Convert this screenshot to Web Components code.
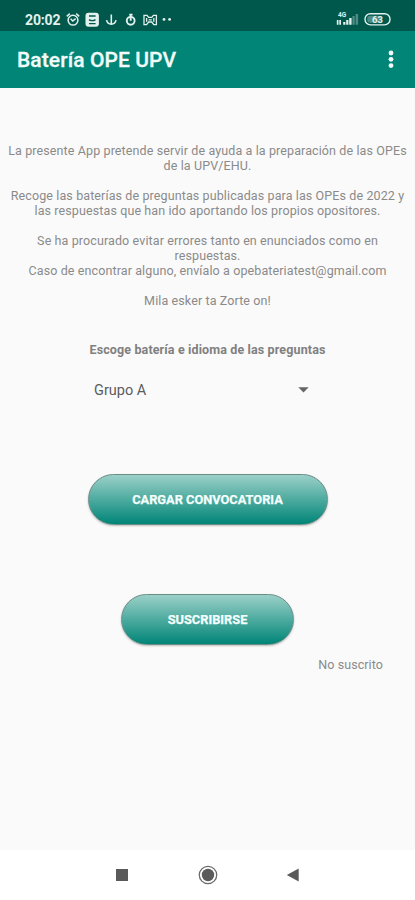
<!DOCTYPE html>
<html lang="es"><head><meta charset="utf-8"><title>Batería OPE UPV</title>
<style>
html,body{margin:0;height:100%;background:#fafafa}
body{font-family:Roboto,"Liberation Sans",sans-serif}
</style></head><body>
<ope-app></ope-app>
<script>
const define=(name,html)=>customElements.define(name,class extends HTMLElement{
  constructor(){super();this.attachShadow({mode:'open'}).innerHTML=html;}
});

define('status-bar',`<style>
:host{display:flex;box-sizing:border-box;height:31px;background:#00574b;color:#e2f1ee;padding:8px 20px 0 25px;align-items:center;justify-content:space-between}
.l,.r{display:flex;align-items:center}
.time{font-size:14px;font-weight:700;width:35px;letter-spacing:-.15px;white-space:nowrap;line-height:16px}
svg{display:block;fill:none;stroke:currentColor}
</style>
<div class="l"><span class="time">20:02</span>
<svg width="120" height="20" viewBox="60 10 120 20">
 <g stroke-width="1.5"><circle cx="73" cy="20.2" r="4.9"/><path d="M66.8 16.4l3-2.8M79.2 16.4l-3-2.8M70.6 18.8l2.2 2.2 2.8-2.4"/></g>
 <rect x="85.5" y="12.7" width="13.4" height="14" rx="3" fill="currentColor" stroke="none"/>
 <path d="M89 16h6.6M89 19.6q3.2 2.2 6.5 0M89 23.6h6.6" stroke="#00574b" stroke-width="1.3"/>
 <g stroke-width="1.6"><path d="M111.3 14.4v9M106.6 20.2q.8 4 4.7 4t4.7-4"/></g>
 <g stroke-width="1.9"><circle cx="130.7" cy="20.8" r="3.9"/><path d="M129.2 14.6h3.4M130.7 14.6v6.2"/></g>
 <g stroke-width="1.3"><path d="M144 24.6v-9.2h3l1.6 2h3.2l1.6-2h3v9.2h-2.6l-2-2.6h-3.2l-2 2.6zM146.6 18v3.8M153.8 18v3.8M148.6 19.8h3.2"/></g>
 <g fill="currentColor" stroke="none"><circle cx="164" cy="19.4" r="1.4"/><circle cx="169.6" cy="19.4" r="1.4"/></g>
</svg></div>
<div class="r"><svg width="60" height="20" viewBox="335 10 60 20">
 <text x="338" y="17.3" font-family="Roboto" font-size="6.5" font-weight="700" fill="currentColor" stroke="none">4G</text>
 <g stroke="none" fill="currentColor"><path d="M336.8 20h1.7v4.8h-1.7zM339.3 20h1.7v4.8h-1.7zM343.2 22h2.2v2.8h-2.2zM346.2 20h2.2v4.8h-2.2zM349.2 18h2.4v6.8h-2.4z"/><path opacity=".35" d="M352.4 16h2.3v8.8h-2.3zM355.6 14h2.5v10.8h-2.5z"/></g>
 <rect x="365" y="13.7" width="25" height="11.2" rx="5.4" stroke-width="1.4"/>
 <rect x="367.2" y="15.8" width="14" height="7" rx="3" fill="currentColor" opacity=".35" stroke="none"/>
 <text x="372" y="22.8" font-family="Roboto" font-size="9.5" font-weight="700" fill="currentColor" stroke="none">63</text>
</svg></div>`);

define('app-bar',`<style>
:host{display:flex;box-sizing:border-box;height:57px;background:#008577;color:#f2fbf9;padding:0 21px 0 17px;align-items:center;justify-content:space-between}
span{font-size:21px;font-weight:500;line-height:28px;letter-spacing:.08px;-webkit-text-stroke:.3px currentColor;white-space:nowrap}
svg{display:block;fill:currentColor;margin-top:-2px}
</style><span><slot></slot></span>
<svg width="6" height="20" viewBox="0 0 6 20"><circle cx="3" cy="4" r="2.4"/><circle cx="3" cy="10.3" r="2.4"/><circle cx="3" cy="16.6" r="2.4"/></svg>`);

define('text-line',`<style>:host{display:block;height:15px;line-height:15px;white-space:pre}</style><slot></slot>`);

define('intro-text',`<style>
:host{display:block;text-align:center;font-size:12.5px;letter-spacing:.11px;color:#8a8a8a}
</style><slot></slot>`);

define('group-select',`<style>
:host{display:flex;align-items:center;justify-content:space-between;width:215px;height:20px;font-size:14.5px;color:#5c5c5c}
svg{display:block;fill:#666}
</style><slot></slot><svg width="11" height="6" viewBox="0 0 11 6"><path d="M.3.3h10.4L5.5 5.6z"/></svg>`);

define('pill-button',`<style>
:host{display:block}
button{display:block;box-sizing:border-box;width:100%;height:51px;border:1px solid #6b8d87;border-radius:26px;background:linear-gradient(#9bd0c8,#008577);color:#f4fffd;font:700 12.8px Roboto,"Liberation Sans",sans-serif;-webkit-text-stroke:.25px currentColor;padding:0;box-shadow:0 1px 2px rgba(0,0,0,.25)}
</style><button><slot></slot></button>`);

define('nav-bar',`<style>
:host{display:flex;box-sizing:border-box;height:50px;background:#fff;padding:0 115px;align-items:center;justify-content:space-between}
svg{display:block;fill:#5a5a5a}
</style>
<svg width="14" height="14" viewBox="0 0 14 14"><path d="M1 1h12v12H1z"/></svg>
<svg width="20" height="20" viewBox="0 0 20 20"><circle cx="10" cy="10" r="6.2"/><circle cx="10" cy="10" r="8.7" fill="none" stroke="#6a6a6a" stroke-width="1.3"/></svg>
<svg width="14" height="14" viewBox="0 0 14 14"><path d="M12.7.5v13L.8 7z"/></svg>`);

define('ope-app',`<style>
:host{display:flex;flex-direction:column;height:900px;width:415px;overflow:hidden}
main{flex:1;display:flex;flex-direction:column;align-items:center;padding-top:55px;box-sizing:border-box}
h2{margin:34px 0 0;font-size:12.5px;line-height:15px;font-weight:700;letter-spacing:.13px;color:#808080;white-space:nowrap}
group-select{margin:23px 12px 0 0}
.load{width:240px;margin-top:74px}
.sub{width:173px;margin-top:69px}
.state{align-self:flex-end;margin:12px 32px 0 0;font-size:12.5px;line-height:15px;letter-spacing:.08px;color:#8a8a8a;white-space:nowrap}
</style>
<status-bar></status-bar>
<app-bar>Batería OPE UPV</app-bar>
<main>
<intro-text>
<text-line>La presente App pretende servir de ayuda a la preparación de las OPEs</text-line>
<text-line>de la UPV/EHU.</text-line><text-line></text-line>
<text-line>Recoge las baterías de preguntas publicadas para las OPEs de 2022 y</text-line>
<text-line>las respuestas que han ido aportando los propios opositores.</text-line><text-line></text-line>
<text-line>Se ha procurado evitar errores tanto en enunciados como en</text-line>
<text-line>respuestas.</text-line>
<text-line>Caso de encontrar alguno, envíalo a opebateriatest@gmail.com</text-line><text-line></text-line>
<text-line>Mila esker ta Zorte on!</text-line>
</intro-text>
<h2>Escoge batería e idioma de las preguntas</h2>
<group-select>Grupo A</group-select>
<pill-button class="load">CARGAR CONVOCATORIA</pill-button>
<pill-button class="sub">SUSCRIBIRSE</pill-button>
<div class="state">No suscrito</div>
</main>
<nav-bar></nav-bar>`);
</script></body></html>
